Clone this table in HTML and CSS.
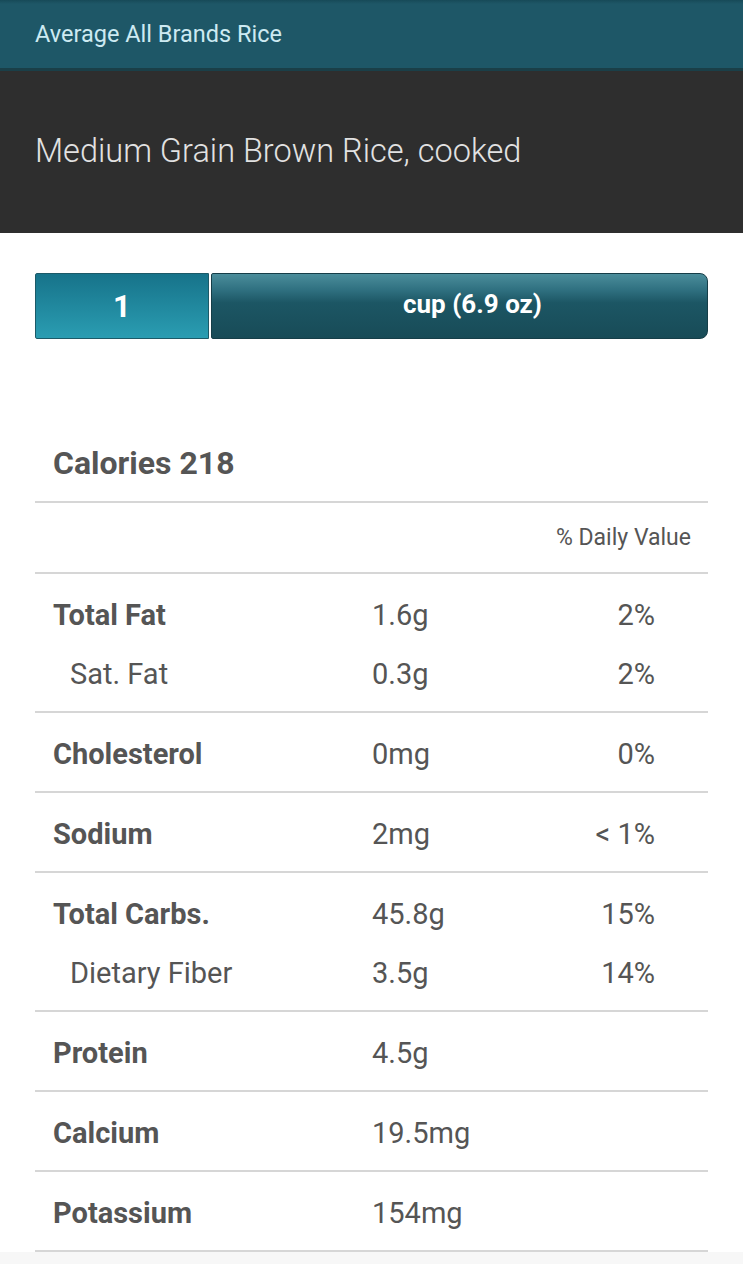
FILE: index.html
```html
<!DOCTYPE html>
<html>
<head>
<meta charset="utf-8">
<link rel="stylesheet" href="styles.css">
</head>
<body>
<div class="topbar">Average All Brands Rice</div>
<div class="header">Medium Grain Brown Rice, cooked</div>
<div class="content">
  <div class="serving">
    <div class="qty">1</div>
    <div class="unit">cup (6.9 oz)</div>
  </div>
  <div class="calories">Calories 218</div>
  <div class="dvhead">% Daily Value</div>
  <div class="group">
    <div class="row"><span class="lbl">Total Fat</span><span class="val">1.6g</span><span class="pct">2%</span></div>
    <div class="row sub"><span class="lbl">Sat. Fat</span><span class="val">0.3g</span><span class="pct">2%</span></div>
  </div>
  <div class="group">
    <div class="row"><span class="lbl">Cholesterol</span><span class="val">0mg</span><span class="pct">0%</span></div>
  </div>
  <div class="group">
    <div class="row"><span class="lbl">Sodium</span><span class="val">2mg</span><span class="pct">&lt; 1%</span></div>
  </div>
  <div class="group">
    <div class="row"><span class="lbl">Total Carbs.</span><span class="val">45.8g</span><span class="pct">15%</span></div>
    <div class="row sub"><span class="lbl">Dietary Fiber</span><span class="val">3.5g</span><span class="pct">14%</span></div>
  </div>
  <div class="group">
    <div class="row"><span class="lbl">Protein</span><span class="val">4.5g</span><span class="pct"></span></div>
  </div>
  <div class="group">
    <div class="row"><span class="lbl">Calcium</span><span class="val">19.5mg</span><span class="pct"></span></div>
  </div>
  <div class="group">
    <div class="row"><span class="lbl">Potassium</span><span class="val">154mg</span><span class="pct"></span></div>
  </div>
</div>
<div class="footer"></div>
</body>
</html>
```
FILE: styles.css
```css
html, body {
  margin: 0;
  padding: 0;
  background: #ffffff;
  font-family: Roboto, "Liberation Sans", sans-serif;
}
.topbar {
  height: 71px;
  box-sizing: border-box;
  background: linear-gradient(#174a58 0, #1e5767 4px, #1e5767 100%);
  border-bottom: 3px solid #1a3f48;
  color: #cdeaf2;
  font-size: 23.5px;
  padding-left: 35px;
  display: flex;
  align-items: center;
}
.header {
  height: 162px;
  box-sizing: border-box;
  background: #2e2e2e;
  color: #e2e2e2;
  font-size: 32.5px;
  font-weight: 300;
  padding-left: 35px;
  padding-bottom: 2px;
  display: flex;
  align-items: center;
}
.content {
  padding: 40px 35px 0 35px;
  background: #fff;
}
.serving {
  display: flex;
  height: 66px;
}
.qty {
  width: 174px;
  box-sizing: border-box;
  border: 1px solid #1c5a68;
  background: linear-gradient(#17738a, #2a9db2);
  color: #fff;
  font-weight: 700;
  font-size: 31px;
  display: flex;
  align-items: center;
  justify-content: center;
  border-radius: 2px 0 0 2px;
}
.unit {
  flex: 1;
  margin-left: 2px;
  background: linear-gradient(#4b8d9b 0, #2f7080 25%, #1c5664 45%, #184b57 100%);
  border: 1px solid #163e48;
  border-radius: 2px 8px 8px 2px;
  color: #fff;
  font-weight: 700;
  font-size: 26px;
  display: flex;
  align-items: center;
  justify-content: center;
  padding-bottom: 4px;
  padding-left: 26px;
  box-sizing: border-box;
}
.calories {
  margin-top: 96px;
  height: 68px;
  box-sizing: border-box;
  padding-left: 18px;
  font-size: 32px;
  font-weight: 700;
  color: #555;
  line-height: 56px;
  border-bottom: 2px solid #d6d6d6;
}
.dvhead {
  height: 71px;
  box-sizing: border-box;
  border-bottom: 2px solid #d6d6d6;
  text-align: right;
  padding-right: 17px;
  font-size: 23px;
  color: #555;
  line-height: 70px;
}
.group {
  border-bottom: 2px solid #d6d6d6;
  padding: 12px 0 8px;
}
.row {
  display: flex;
  align-items: center;
  height: 58px;
  font-size: 29px;
  color: #555;
}
.row.sub {
  height: 59px;
}
.row .lbl {
  width: 337px;
  box-sizing: border-box;
  padding-left: 18px;
  font-weight: 700;
}
.row.sub .lbl {
  padding-left: 35px;
  font-weight: 400;
}
.row .val {
  width: 180px;
}
.row .pct {
  width: 103px;
  text-align: right;
}
.footer {
  background: #f7f7f7;
  height: 40px;
}
```
